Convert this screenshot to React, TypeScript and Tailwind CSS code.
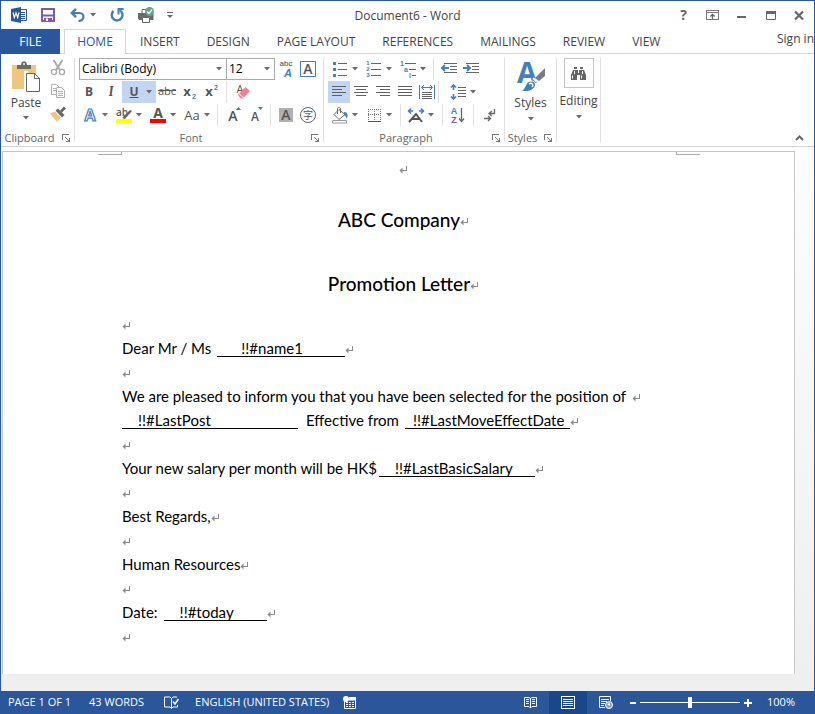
import type { ReactNode } from "react";

const Arrow = () => (
  <svg width="6" height="4" viewBox="0 0 6 4" className="shrink-0">
    <path d="M0 0h6L3 3.4z" fill="#6a6a6a" />
  </svg>
);

const Sep = () => <span className="h-[22px] w-px shrink-0 bg-[#e1e1e1]" />;

function Tool({ label, children, active = false }: { label: string; children: ReactNode; active?: boolean }) {
  return (
    <button
      type="button"
      aria-label={label}
      className={`flex h-[22px] w-[22px] shrink-0 items-center justify-center ${active ? "bg-[#c2d5f2]" : ""}`}
    >
      {children}
    </button>
  );
}

function MenuTool({ label, children, active = false }: { label: string; children: ReactNode; active?: boolean }) {
  return (
    <button
      type="button"
      aria-label={label}
      className={`flex h-[22px] w-[34px] shrink-0 items-center ${active ? "bg-[#c2d5f2]" : ""}`}
    >
      <span className="flex w-6 items-center justify-center">{children}</span>
      <Arrow />
    </button>
  );
}

function Group({ name, children, launcher = true, width }: { name: string; children: ReactNode; launcher?: boolean; width: string }) {
  return (
    <section className={`flex shrink-0 ${width}`}>
      <div className="flex min-w-0 flex-1 flex-col pt-[3px]">
        <div className="h-[69px]">{children}</div>
        <div className="flex h-5 items-center pt-1">
          {launcher && (
            <>
              <span className="flex-1 text-center text-[11px] leading-4 text-[#666]">{name}</span>
              <button type="button" aria-label={`${name} settings`} className="flex w-4 justify-center">
                <svg width="8" height="8" viewBox="0 0 8 8" fill="none" stroke="#777" shapeRendering="crispEdges">
                  <path d="M.5 6V.5H7M3 3l4 4M7.500 4v3.500H4" />
                </svg>
              </button>
            </>
          )}
        </div>
      </div>
      <span className="my-1 w-px bg-[#e1e1e1]" />
    </section>
  );
}

function Letter({ children, size = 15, fill = "#555", x = 8, y = 13, weight = 600, italic = false }: { children: string; size?: number; fill?: string; x?: number; y?: number; weight?: number; italic?: boolean }) {
  return (
    <text x={x} y={y} fontSize={size} fill={fill} fontWeight={weight} fontStyle={italic ? "italic" : "normal"} textAnchor="middle" fontFamily="Open Sans, sans-serif">
      {children}
    </text>
  );
}

function Tiny({ children, size = 7, fill = "#447fb8", x, y, weight = 700, italic = false }: { children: string; size?: number; fill?: string; x: number; y: number; weight?: number; italic?: boolean }) {
  return (
    <text x={x} y={y} fontSize={size} fill={fill} fontWeight={weight} fontStyle={italic ? "italic" : "normal"} textAnchor="middle" fontFamily="Liberation Sans, sans-serif">
      {children}
    </text>
  );
}

const Svg = ({ w = 16, h = 16, children }: { w?: number; h?: number; children: ReactNode }) => (
  <svg width={w} height={h} viewBox={`0 0 ${w} ${h}`} fill="none" className="shrink-0 overflow-visible">
    {children}
  </svg>
);

const Lines = ({ d, w = 15, h = 13 }: { d: string; w?: number; h?: number }) => (
  <svg width={w} height={h} viewBox={`0 0 ${w} ${h}`} fill="none" stroke="#606060" shapeRendering="crispEdges">
    <path d={d} />
  </svg>
);

const Mark = () => (
  <svg width="8" height="8" viewBox="0 0 8 8" fill="none" stroke="#8a8a8a" className="inline-block">
    <path d="M7.500 0v4.500H1" shapeRendering="crispEdges" />
    <path d="M3.500 1.500v6L.5 4.500z" fill="#8a8a8a" stroke="none" />
  </svg>
);

const Field = ({ children, className }: { children: string; className: string }) => (
  <span className={`inline-block border-b border-black leading-4 ${className}`}>{children}</span>
);

const Line = ({ children }: { children?: ReactNode }) => (
  <p className="h-6 whitespace-nowrap leading-6">
    {children}
    <Mark />
  </p>
);

const tabs = ["INSERT", "DESIGN", "PAGE LAYOUT", "REFERENCES", "MAILINGS", "REVIEW", "VIEW"];

function TitleBar() {
  return (
    <header className="flex h-7 items-center">
      <div className="flex flex-1 items-center pl-[10px]">
        <Svg w={16} h={16}>
          <path d="M9 2.500h6.500v11H9" fill="#fff" stroke="#2b579a" />
          <path d="M9 5.500h5M9 7.500h5M9 9.500h5M9 11.500h5" stroke="#2b579a" />
          <path d="M0 2l10-2v16L0 14z" fill="#2b579a" />
          <path d="M2 5.500l1.300 5L5 6l1.700 4.500L8 5.500" stroke="#fff" strokeWidth="1.200" />
        </Svg>
        <button type="button" aria-label="Save" className="ml-[14px]">
          <Svg w={14} h={14}>
            <path d="M1 1h12v12H1z" stroke="#8456a8" strokeWidth="2" />
            <path d="M2 6.500h10v2H2zM3 10h8v3H3z" fill="#8456a8" />
            <path d="M5 10.500h2V13H5z" fill="#fff" />
          </Svg>
        </button>
        <button type="button" aria-label="Undo" className="ml-[15px] flex items-center gap-[5px]">
          <Svg w={15} h={14}>
            <path d="M1.500 5h8.200c5.200 0 5.200 7.500-1.200 8" stroke="#447fb8" strokeWidth="2.200" />
            <path d="M6 .8L1.800 5 6 9.200" stroke="#447fb8" strokeWidth="2.400" />
          </Svg>
          <Arrow />
        </button>
        <button type="button" aria-label="Redo" className="ml-[14px]">
          <Svg w={14} h={14}>
            <path d="M9.500 2.200A5.400 5.400 0 1 1 3.500 3" stroke="#447fb8" strokeWidth="2.400" />
            <path d="M8.500 6.500V1h5.200" stroke="#447fb8" strokeWidth="2" />
          </Svg>
        </button>
        <button type="button" aria-label="Print" className="ml-[14px]">
          <Svg w={17} h={16}>
            <path d="M4 6V2.500h5M1 6.500h14v6H1z" stroke="#666" />
            <path d="M0 6h15v6h-3v-2H4v2H0z" fill="#6b6b6b" />
            <path d="M4.500 10.500h7v5h-7z" fill="#fff" stroke="#666" />
            <circle cx="11.500" cy="4.500" r="4.500" fill="#62a58b" />
            <path d="M9.200 4.500l1.800 2 3-3.800" stroke="#fff" strokeWidth="1.200" />
          </Svg>
        </button>
        <button type="button" aria-label="Customize toolbar" className="ml-[12px]">
          <Svg w={6} h={7}>
            <path d="M0 .5h6" stroke="#666" />
            <path d="M0 3h6L3 6z" fill="#666" />
          </Svg>
        </button>
      </div>
      <h1 className="pt-[2px] text-[12px] text-[#444]">Document6 - Word</h1>
      <div className="flex flex-1 items-center justify-end gap-[18px] pr-[10px]">
        <button type="button" aria-label="Help" className="mr-px text-[14px] font-bold leading-4 text-[#666]">?</button>
        <button type="button" aria-label="Ribbon display options">
          <Svg w={13} h={10}>
            <path d="M.5.5h12v9H.500zM1 2.500h11" stroke="#777" shapeRendering="crispEdges" />
            <path d="M6.500 9V4.500M4.300 6.500l2.200-2.200 2.200 2.200" stroke="#666" strokeWidth="1.300" />
          </Svg>
        </button>
        <button type="button" aria-label="Minimize" className="pt-1">
          <Svg w={9} h={2}><path d="M0 1h9" stroke="#666" strokeWidth="2" /></Svg>
        </button>
        <button type="button" aria-label="Maximize" className="ml-[2px]">
          <Svg w={10} h={9}>
            <path d="M.5.5h9v8H.500z" stroke="#666" /><path d="M0 0h10v3H0z" fill="#666" />
          </Svg>
        </button>
        <button type="button" aria-label="Close">
          <Svg w={10} h={9}><path d="M1 .5l8 8M9 .5l-8 8" stroke="#666" strokeWidth="2.200" /></Svg>
        </button>
      </div>
    </header>
  );
}

function Tabs() {
  return (
    <nav className="flex h-[25px] shrink-0 text-[12px] text-[#444]">
      <button type="button" className="w-[59px] shrink-0 bg-[#2b579a] text-white">FILE</button>
      <span className="w-1 shrink-0 border-b border-[#d4d4d4]" />
      <button type="button" className="w-[62px] shrink-0 border-x border-t border-[#d4d4d4] text-[#2b579a]">HOME</button>
      <div className="flex min-w-0 flex-1 gap-px border-b border-[#d4d4d4] pl-px">
        {tabs.map((t) => (
          <button key={t} type="button" className="shrink-0 whitespace-nowrap px-[13px] pt-px">{t}</button>
        ))}
        <a href="#signin" className="ml-auto h-5 shrink-0 whitespace-nowrap leading-5">Sign in</a>
      </div>
    </nav>
  );
}

function Clipboard() {
  return (
    <Group name="Clipboard" width="w-[74px]">
      <div className="flex pl-[2px]">
        <button type="button" className="flex w-[46px] flex-col items-center pt-1 text-[12px] leading-4 text-[#444]">
          <Svg w={28} h={32}>
            <path d="M0 4h24v24H0z" fill="#eec680" />
            <path d="M5 8V4h4c0-5 6-5 6 0h4v4z" fill="#6b6b6b" />
            <circle cx="12" cy="3" r="1" fill="#fff" />
            <path d="M12 10h4v20h-4z" fill="#fff" />
            <path d="M14.500 12.500h8l5 5v13h-13z" fill="#fff" stroke="#666" />
            <path d="M22.500 12v5.500H28" stroke="#666" />
          </Svg>
          <span className="mt-[2px] mb-[5px]">Paste</span>
          <Arrow />
        </button>
        <div className="-ml-[2px] flex flex-col gap-px">
          <Tool label="Cut">
            <Svg>
              <path d="M3.500 0L10 10M12.500 0L6 10" stroke="#a9a9a9" strokeWidth="2" />
              <circle cx="4" cy="12" r="2.600" stroke="#a9a9a9" strokeWidth="1.400" />
              <circle cx="12" cy="12" r="2.600" stroke="#a9a9a9" strokeWidth="1.400" />
            </Svg>
          </Tool>
          <Tool label="Copy">
            <Svg>
              <path d="M1.500 1.500h5l3 3v7h-8z" fill="#fff" stroke="#b0b0b0" />
              <path d="M3 5.500h4M3 7.500h4" stroke="#b0b0b0" />
              <path d="M6.500 4.500h5l3 3v7h-8z" fill="#fff" stroke="#b0b0b0" />
              <path d="M8 8.500h5M8 10.500h5M8 12.500h5" stroke="#b0b0b0" />
            </Svg>
          </Tool>
          <Tool label="Format painter">
            <Svg>
              <path d="M0 7.500l5-2 6 6-4 4.500z" fill="#eec680" />
              <path d="M5.500 4.500l2.500-2 6.500 6.500-2.500 2.500z" fill="#666" />
              <path d="M10 4.500L14 .5 16 2.500l-4 4z" fill="#666" />
            </Svg>
          </Tool>
        </div>
      </div>
    </Group>
  );
}

function FontGroup() {
  return (
    <Group name="Font" width="w-[249px]">
      <div className="flex h-[23px] items-center pl-1">
        <span className="relative w-[148px]">
          <select aria-label="Font name" className="block h-[22px] w-full appearance-none border border-[#ababab] bg-white px-[2px] text-[12px] leading-4 text-black">
            <option>Calibri (Body)</option>
          </select>
          <span className="pointer-events-none absolute right-[5px] top-[9px] flex"><Arrow /></span>
        </span>
        <span className="relative -ml-px w-[49px]">
          <select aria-label="Font size" className="block h-[22px] w-full appearance-none border border-[#ababab] bg-white px-[2px] text-[12px] leading-4 text-black">
            <option>12</option>
          </select>
          <span className="pointer-events-none absolute right-[5px] top-[9px] flex"><Arrow /></span>
        </span>
        <Tool label="Phonetic guide">
          <Svg>
            <Tiny size={8} x={8} y={5} weight={400} fill="#444">abc</Tiny>
            <Tiny size={11} x={10} y={16} italic>A</Tiny>
          </Svg>
        </Tool>
        <Tool label="Character border">
          <Svg>
            <path d="M.5.5h15v15H.500z" stroke="#447fb8" />
            <Letter size={14} y={13}>A</Letter>
          </Svg>
        </Tool>
      </div>
      <div className="flex h-[23px] items-center pl-[3px] text-[12px] text-[#555]">
        <Tool label="Bold"><b>B</b></Tool>
        <Tool label="Italic"><i className="font-serif text-[13px] font-bold">I</i></Tool>
        <MenuTool label="Underline" active><b className="underline">U</b></MenuTool>
        <Tool label="Strikethrough"><s className="text-[11px]">abc</s></Tool>
        <Tool label="Subscript">
          <Svg><Letter size={13} x={6} y={12} weight={700}>x</Letter><Tiny x={13} y={15}>2</Tiny></Svg>
        </Tool>
        <Tool label="Superscript">
          <Svg><Letter size={13} x={6} y={12} weight={700}>x</Letter><Tiny x={13} y={6}>2</Tiny></Svg>
        </Tool>
        <span className="w-[4px]" />
        <Sep />
        <span className="w-[5px]" />
        <Tool label="Clear formatting">
          <Svg>
            <Letter size={11} x={5} y={9} weight={400}>A</Letter>
            <path d="M3 10.500l7.500-7.500 4.500 4L8 14.500H5.500z" fill="#e8819a" />
            <path d="M4 9.500l4.500 4.500" stroke="#fff" />
          </Svg>
        </Tool>
      </div>
      <div className="flex h-[23px] items-center pl-[3px] text-[#555]">
        <MenuTool label="Text effects">
          <Svg>
            <text x="8" y="14" textAnchor="middle" fontSize="16" fontWeight="700" fill="#fff" stroke="#447fb8" strokeWidth="1.200" fontFamily="Open Sans, sans-serif">A</text>
          </Svg>
        </MenuTool>
        <MenuTool label="Highlight colour">
          <Svg>
            <Letter size={10} x={6} y={9} weight={600}>ab</Letter>
            <path d="M6 11l8-8 2 1-7 8z" fill="#666" />
            <path d="M0 12h16v4H0z" fill="#ff0" />
          </Svg>
        </MenuTool>
        <MenuTool label="Font colour">
          <Svg><Letter size={14} y={11} weight={700}>A</Letter><path d="M0 12h16v4H0z" fill="#f00" /></Svg>
        </MenuTool>
        <MenuTool label="Change case"><span className="text-[13px] leading-4">Aa</span></MenuTool>
        <span className="w-[3px]" />
        <Sep />
        <span className="w-[4px]" />
        <Tool label="Grow font"><Svg><Letter size={14} y={14}>A</Letter><path d="M11 3h5l-2.500-3z" fill="#447fb8" /></Svg></Tool>
        <Tool label="Shrink font"><Svg><Letter size={12} y={14}>A</Letter><path d="M11 0h5l-2.500 3z" fill="#447fb8" /></Svg></Tool>
        <span className="w-[4px]" />
        <Sep />
        <span className="w-[4px]" />
        <Tool label="Character shading"><Svg w={14} h={14}><path d="M0 0h14v14H0z" fill="#b1b1b1" /><Letter x={7} y={12} size={14}>A</Letter></Svg></Tool>
        <Tool label="Enclose characters">
          <Svg>
            <circle cx="8" cy="8" r="7.500" stroke="#666" />
            <text x="8" y="12" fontSize="10" fill="#555" textAnchor="middle" fontFamily="Noto Sans CJK TC, sans-serif">字</text>
          </Svg>
        </Tool>
      </div>
    </Group>
  );
}

function Paragraph() {
  return (
    <Group name="Paragraph" width="w-[181px]">
      <div className="flex h-[23px] items-center pl-1">
        <MenuTool label="Bullets">
          <Svg>
            <path d="M1 1h3v3H1zM1 7h3v3H1zM1 13h3v3H1z" fill="#447fb8" />
            <path d="M6 2.500h9M6 8.500h9M6 14.500h9" stroke="#666" />
          </Svg>
        </MenuTool>
        <MenuTool label="Numbering">
          <Svg>
            <Tiny size={6} x={2} y={4}>1</Tiny><Tiny size={6} x={2} y={10}>2</Tiny><Tiny size={6} x={2} y={16}>3</Tiny>
            <path d="M5 2.500h10M5 8.500h10M5 14.500h10" stroke="#666" />
          </Svg>
        </MenuTool>
        <MenuTool label="Multilevel list">
          <Svg>
            <Tiny x={2} y={5}>1</Tiny><Tiny x={6} y={11}>a</Tiny><Tiny x={10} y={17}>i</Tiny>
            <path d="M5 2.500h11M9 8.500h7M12 14.500h4" stroke="#666" />
          </Svg>
        </MenuTool>
        <span className="w-[3px]" />
        <Sep />
        <span className="w-[4px]" />
        <Tool label="Decrease indent">
          <Svg><path d="M3 2.500h13M9 5.500h7M9 8.500h7M3 11.500h13" stroke="#666" /><path d="M2 7h6M4 4L1 7l3 3" stroke="#447fb8" strokeWidth="2" /></Svg>
        </Tool>
        <Tool label="Increase indent">
          <Svg><path d="M3 2.500h13M9 5.500h7M9 8.500h7M3 11.500h13" stroke="#666" /><path d="M0 7h6M4 4l3 3-3 3" stroke="#447fb8" strokeWidth="2" /></Svg>
        </Tool>
      </div>
      <div className="flex h-[23px] items-center pl-1">
        <Tool label="Align left" active><Lines d="M0 1.500h14M0 4.500h10M0 7.500h14M0 10.500h10" /></Tool>
        <Tool label="Centre"><Lines d="M0 1.500h14M2 4.500h10M0 7.500h14M2 10.500h10" /></Tool>
        <Tool label="Align right"><Lines d="M0 1.500h14M4 4.500h10M0 7.500h14M4 10.500h10" /></Tool>
        <Tool label="Justify"><Lines d="M0 1.500h14M0 4.500h14M0 7.500h14M0 10.500h14" /></Tool>
        <Tool label="Distribute">
          <Svg>
            <path d="M.5 1v14M15.500 1v14M3 3.500h10M5 1L2.500 3.500 5 6M11 1l2.500 2.500L11 6" stroke="#447fb8" />
            <path d="M3 8.500h10M3 10.500h10M3 12.500h10M3 14.500h10" stroke="#666" />
          </Svg>
        </Tool>
        <Sep />
        <span className="w-[7px]" />
        <MenuTool label="Line spacing">
          <Svg>
            <path d="M3.500 1v5M3.500 10v5M1 3.500L3.500 1 6 3.500M1 12.500L3.500 15 6 12.500" stroke="#447fb8" strokeWidth="1.600" />
            <path d="M8 3.500h8M8 6.500h8M8 9.500h8M8 12.500h8" stroke="#666" />
          </Svg>
        </MenuTool>
      </div>
      <div className="flex h-[23px] items-center pl-1">
        <MenuTool label="Shading">
          <Svg>
            <path d="M7 2.500l6 5-6 5-5-5zM5.500 7V2c0-2 3-2 3 0v4" stroke="#666" />
            <path d="M12 5c4 0 4 3 3 7-1-2-1-3-3-4z" fill="#447fb8" />
            <path d="M.5 13.500h14v2.500H.500z" fill="#fff" stroke="#999" />
          </Svg>
        </MenuTool>
        <MenuTool label="Borders">
          <Svg>
            <path d="M2 2.500h12M2 7.500h12M2.500 2v12M8.500 2v12M14.500 2v12" stroke="#777" strokeDasharray="1 1" />
            <path d="M2 14.500h13" stroke="#555" />
          </Svg>
        </MenuTool>
        <span className="w-[4px]" />
        <Sep />
        <span className="w-[3px]" />
        <MenuTool label="Asian layout">
          <Svg>
            <path d="M1 15L8 7l6 8M4 12h8" stroke="#555" strokeWidth="2" />
            <path d="M0 4h5M3 1.500L.5 4 3 6.500M16 4h-5M13 1.500L15.500 4 13 6.500" stroke="#447fb8" strokeWidth="1.500" />
          </Svg>
        </MenuTool>
        <span className="w-[4px]" />
        <Sep />
        <span className="w-[4px]" />
        <Tool label="Sort">
          <Svg>
            <Tiny size={9} x={4} y={7}>A</Tiny><Tiny size={9} x={4} y={16} fill="#8456a8">Z</Tiny>
            <path d="M11.500 1v13M9 11.500l2.500 3 2.500-3" stroke="#666" strokeWidth="1.300" />
          </Svg>
        </Tool>
        <span className="w-[4px]" />
        <Sep />
        <span className="w-[5px]" />
        <Tool label="Show marks">
          <Svg w={12} h={14}>
            <path d="M10.500 1v4.500H5M8 3L5 5.500 8 8M0 10.500h6M4 8l2.500 2.500L4 13" stroke="#666" strokeWidth="1.300" />
          </Svg>
        </Tool>
      </div>
    </Group>
  );
}

function Ribbon() {
  return (
    <div className="flex h-[93px] shrink-0 border-b border-[#d4d4d4] bg-white">
      <Clipboard />
      <FontGroup />
      <Paragraph />
      <Group name="Styles" width="w-[52px]">
        <button type="button" className="flex w-full flex-col items-center pt-1 text-[12px] leading-4 text-[#444]">
          <Svg w={28} h={32}>
            <text x="10" y="22" fontSize="29" fontWeight="700" fill="#447fb8" textAnchor="middle" fontFamily="Open Sans, sans-serif">A</text>
            <path d="M28 7v8l-6 5-4-3z" fill="#7c7c7c" />
            <path d="M16 17l4 4" stroke="#fff" strokeWidth="2" />
            <path d="M4 30c5-2 4-10 10-10 5 0 6 5 2 8-3 3-8 3-12 2z" fill="#447fb8" stroke="#fff" />
            <path d="M12 23c3-2 5 1 3 3" stroke="#fff" strokeWidth="1.500" />
          </Svg>
          <span className="mt-[2px] mb-[6px]">Styles</span>
          <Arrow />
        </button>
      </Group>
      <Group name="Editing" width="w-[44px]" launcher={false}>
        <button type="button" className="flex w-full flex-col items-center pt-px text-[12px] leading-4 text-[#444]">
          <span className="flex h-[30px] w-[30px] items-center justify-center border border-[#c6c6c6]">
            <Svg w={15} h={13}>
              <path d="M3 0h3v2H3zM9 0h3v2H9zM2 3h5v3h1V3h5l2 5v5H9V8H6v5H0V8z" fill="#666" />
              <path d="M1.500 8.500v3M10.500 8.500v3M3.500 4v3M11.500 4v3" stroke="#fff" />
            </Svg>
          </span>
          <span className="mt-[5px] mb-[6px]">Editing</span>
          <Arrow />
        </button>
      </Group>
      <button type="button" aria-label="Collapse ribbon" className="ml-auto mr-[10px] self-end pb-[5px]">
        <Svg w={9} h={6}><path d="M1 5l3.500-3.500L8 5" stroke="#666" strokeWidth="2" /></Svg>
      </button>
    </div>
  );
}

function Letterhead() {
  return (
    <main className="flex flex-1 flex-col bg-linear-to-b from-[#fdfdfd] to-[#efefef] pt-1">
      <article className="mr-[19px] mb-[17px] ml-px flex-1 border-x border-t border-[#c6c6c6] bg-white font-['Lato',sans-serif] text-[15px] text-black">
        <div className="flex justify-between pr-[94px] pl-[95px]">
          <span className="h-[3px] w-6 border-r border-b border-[#ababab]" />
          <span className="h-[3px] w-6 border-b border-l border-[#ababab]" />
        </div>
        <div className="pt-px pr-[110px] pl-[119px]">
          <p className="h-6 text-center leading-6"><Mark /></p>
          <h2 className="mt-6 text-center text-[19px] font-medium leading-8">ABC Company<Mark /></h2>
          <h2 className="mt-8 mb-3 text-center text-[19px] font-medium leading-8">Promotion Letter<Mark /></h2>
          <Line />
          <Line>Dear Mr / Ms<Field className="ml-[6px] w-[128px] pl-6">!!#name1</Field></Line>
          <Line />
          <Line><span className="mr-[6px]">We are pleased to inform you that you have been selected for the position of</span></Line>
          <Line>
            <Field className="mr-2 w-[176px] pl-4">!!#LastPost</Field>Effective from
            <Field className="ml-[6px] w-[165px] pl-2">!!#LastMoveEffectDate</Field>
          </Line>
          <Line />
          <Line>Your new salary per month will be HK$<Field className="ml-[2px] w-[156px] pl-4">!!#LastBasicSalary</Field></Line>
          <Line />
          <Line>Best Regards,</Line>
          <Line />
          <Line>Human Resources</Line>
          <Line />
          <Line>Date:<Field className="ml-[6px] w-[103px] pl-4">!!#today</Field></Line>
          <Line />
        </div>
      </article>
    </main>
  );
}

function StatusBar() {
  return (
    <footer className="flex h-[23px] shrink-0 items-center bg-[#2b579a] text-[11px] text-white">
      <span className="ml-[7px] whitespace-nowrap">PAGE 1 OF 1</span>
      <span className="ml-[18px] whitespace-nowrap">43 WORDS</span>
      <button type="button" aria-label="Proofing" className="ml-5">
        <Svg w={15} h={13}>
          <path d="M7.500 12.500L6 11H.500V1H6l1.500 1.500zL9 11h4.500V9M7.500 2.500L9 1h4" stroke="#fff" />
          <path d="M9 5.500l2 2.500 3.500-5" stroke="#fff" strokeWidth="1.500" />
        </Svg>
      </button>
      <span className="ml-4 whitespace-nowrap">ENGLISH (UNITED STATES)</span>
      <button type="button" aria-label="Macros" className="ml-[14px]">
        <Svg w={13} h={13}>
          <path d="M2 4h10.500v8.500H1.500V5" stroke="#fff" />
          <path d="M6 1h7v3H6z" fill="#fff" />
          <circle cx="3" cy="3" r="3" fill="#fff" />
          <path d="M3 6.500h8M3 8.500h8M3 10.500h8" stroke="#fff" strokeDasharray="2 1" />
        </Svg>
      </button>
      <div className="ml-auto flex h-full items-center">
        <button type="button" aria-label="Read mode" className="flex h-full w-[38px] items-center justify-center">
          <Svg w={13} h={13}>
            <path d="M.5 1.500H5l1.500 1L8 1.500h4.500v9H8l-1.500 1.500L5 10.500H.500zM6.500 2v10M2 3.500h3M2 5.500h3M2 7.500h3M8 3.500h3M8 5.500h3M8 7.500h3" stroke="#fff" />
          </Svg>
        </button>
        <button type="button" aria-label="Print layout" className="flex h-full w-[38px] items-center justify-center bg-[#19478a]">
          <Svg w={14} h={13}>
            <path d="M.5.5h13v12H.500zM2 3.500h10M2 5.500h10M2 7.500h10M2 9.500h10" stroke="#fff" shapeRendering="crispEdges" />
          </Svg>
        </button>
        <button type="button" aria-label="Web layout" className="flex h-full w-[38px] items-center justify-center">
          <Svg w={14} h={13}>
            <path d="M6 11.500H.500v-11h11V5M2 3.500h8M2 5.500h6M2 7.500h4M2 9.500h3" stroke="#fff" />
            <circle cx="10" cy="9" r="3.500" fill="#7e9cc8" stroke="#fff" />
            <path d="M8 8l3-1v3z" fill="#fff" />
          </Svg>
        </button>
        <button type="button" aria-label="Zoom out" className="ml-[5px]">
          <Svg w={6} h={2}><path d="M0 1h6" stroke="#fff" strokeWidth="2" /></Svg>
        </button>
        <input
          type="range"
          aria-label="Zoom"
          min={0}
          max={200}
          defaultValue={100}
          className="mr-1 ml-1 h-3 w-[100px] appearance-none bg-transparent [&::-webkit-slider-runnable-track]:h-px [&::-webkit-slider-runnable-track]:bg-white [&::-webkit-slider-thumb]:-mt-[5px] [&::-webkit-slider-thumb]:h-[11px] [&::-webkit-slider-thumb]:w-1 [&::-webkit-slider-thumb]:appearance-none [&::-webkit-slider-thumb]:bg-white"
        />
        <button type="button" aria-label="Zoom in">
          <Svg w={8} h={8}><path d="M0 4h8M4 0v8" stroke="#fff" strokeWidth="2" /></Svg>
        </button>
        <span className="mr-[19px] ml-[15px]">100%</span>
      </div>
    </footer>
  );
}

export default function App() {
  return (
    <div className="flex min-h-screen flex-col border-x border-t border-[#2b579a] bg-white font-['Open_Sans',sans-serif]">
      <TitleBar />
      <Tabs />
      <Ribbon />
      <Letterhead />
      <StatusBar />
    </div>
  );
}
